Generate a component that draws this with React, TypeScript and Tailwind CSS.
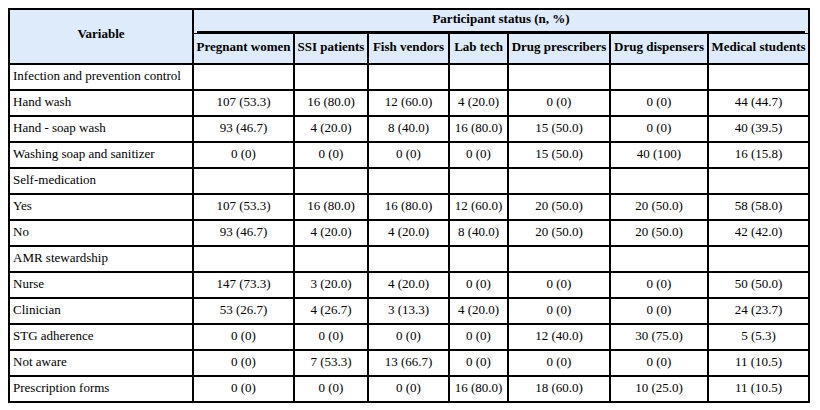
const groups: string[] = [
  "Pregnant women",
  "SSI patients",
  "Fish vendors",
  "Lab tech",
  "Drug prescribers",
  "Drug dispensers",
  "Medical students",
];

type Row = { label: string; values?: string[] };

const rows: Row[] = [
  { label: "Infection and prevention control" },
  { label: "Hand wash", values: ["107 (53.3)", "16 (80.0)", "12 (60.0)", "4 (20.0)", "0 (0)", "0 (0)", "44 (44.7)"] },
  { label: "Hand - soap wash", values: ["93 (46.7)", "4 (20.0)", "8 (40.0)", "16 (80.0)", "15 (50.0)", "0 (0)", "40 (39.5)"] },
  { label: "Washing soap and sanitizer", values: ["0 (0)", "0 (0)", "0 (0)", "0 (0)", "15 (50.0)", "40 (100)", "16 (15.8)"] },
  { label: "Self-medication" },
  { label: "Yes", values: ["107 (53.3)", "16 (80.0)", "16 (80.0)", "12 (60.0)", "20 (50.0)", "20 (50.0)", "58 (58.0)"] },
  { label: "No", values: ["93 (46.7)", "4 (20.0)", "4 (20.0)", "8 (40.0)", "20 (50.0)", "20 (50.0)", "42 (42.0)"] },
  { label: "AMR stewardship" },
  { label: "Nurse", values: ["147 (73.3)", "3 (20.0)", "4 (20.0)", "0 (0)", "0 (0)", "0 (0)", "50 (50.0)"] },
  { label: "Clinician", values: ["53 (26.7)", "4 (26.7)", "3 (13.3)", "4 (20.0)", "0 (0)", "0 (0)", "24 (23.7)"] },
  { label: "STG adherence", values: ["0 (0)", "0 (0)", "0 (0)", "0 (0)", "12 (40.0)", "30 (75.0)", "5 (5.3)"] },
  { label: "Not aware", values: ["0 (0)", "7 (53.3)", "13 (66.7)", "0 (0)", "0 (0)", "0 (0)", "11 (10.5)"] },
  { label: "Prescription forms", values: ["0 (0)", "0 (0)", "0 (0)", "16 (80.0)", "18 (60.0)", "10 (25.0)", "11 (10.5)"] },
];

const widths = ["w-[184px]", "w-[101px]", "w-[74px]", "w-[81px]", "w-[59px]", "w-[102px]", "w-[98px]", "w-[101px]"];

export default function App() {
  return (
    <div className="bg-white w-[820px] h-[410px] pt-2 pl-2 font-['Liberation_Serif',serif] text-[13px] text-black">
      <table className="table-fixed border-collapse w-[802px]">
        <colgroup>
          {widths.map((w, i) => (
            <col key={i} className={w} />
          ))}
        </colgroup>
        <thead className="bg-[#ddebfa]">
          <tr className="h-[24px]">
            <th rowSpan={2} className="border-2 border-black font-bold text-center align-middle pb-[6px]">
              Variable
            </th>
            <th colSpan={7} className="border-2 border-b-0 border-black font-bold p-0 align-top">
              <div className="mx-[3px] pt-[1px] pb-[4px] border-b-2 border-black text-center leading-[16px]">
                Participant status (n, %)
              </div>
            </th>
          </tr>
          <tr className="h-[30px]">
            {groups.map((g) => (
              <th key={g} className="border-2 border-t border-black font-bold text-center px-[2px] pb-[3px] whitespace-nowrap">
                {g}
              </th>
            ))}
          </tr>
        </thead>
        <tbody>
          {rows.map((r) => (
            <tr key={r.label} className="h-[26px]">
              <td className="border-2 border-black px-[3px] pb-[1px] whitespace-nowrap">{r.label}</td>
              {groups.map((g, i) => (
                <td key={g} className="border-2 border-black text-center pb-[1px] whitespace-nowrap">
                  {r.values ? r.values[i] : ""}
                </td>
              ))}
            </tr>
          ))}
        </tbody>
      </table>
    </div>
  );
}
